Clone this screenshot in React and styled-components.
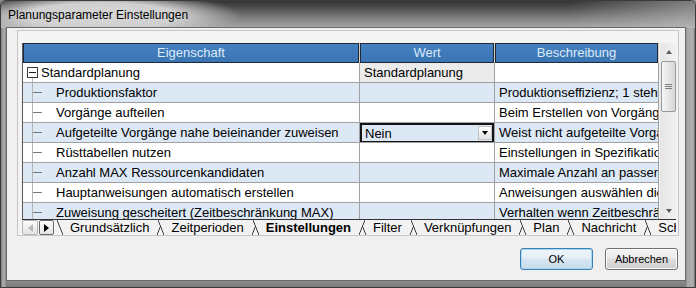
import React from 'react';
import styled, { createGlobalStyle } from 'styled-components';

const Global = createGlobalStyle`
  html, body { margin: 0; padding: 0; background: #8a8a8a; }
  body { font-family: "Liberation Sans", Arial, sans-serif; }
  #root { width: 696px; height: 288px; }
`;

const Window = styled.div`
  width: 696px;
  height: 288px;
  box-sizing: border-box;
  border: 1px solid #3b3b3b;
  border-radius: 6px 6px 0 0;
  overflow: hidden;
  display: flex;
  flex-direction: column;
  background: linear-gradient(to bottom, #8f8f8f, #a2a2a2 80%, #8c8c8c);
`;

const TitleBar = styled.div`
  height: 27px;
  flex: none;
  display: flex;
  align-items: center;
  padding-left: 7px;
  font-size: 12px;
  color: #000;
  background:
    radial-gradient(ellipse 140px 24px at 100px 15px, #d6d6d6 0%, #d0d0d0 55%, rgba(205,205,205,0) 100%),
    linear-gradient(to right, rgba(0,0,0,0) 82%, rgba(190,190,190,0.55) 100%),
    linear-gradient(to bottom, #343434 0%, #525252 28%, #828282 65%, #a8a8a8 100%);
`;

const FrameBody = styled.div`
  flex: 1;
  display: flex;
  padding: 0 10px 7px 6px;
  background: linear-gradient(to right, #7a7a7a 0, #a9a9a9 2px, #a2a2a2 4px, #6e6e6e 6px, rgba(0,0,0,0) 6px),
    linear-gradient(to left, #6e6e6e 0, #b0b0b0 2px, #a5a5a5 8px, #707070 10px, rgba(0,0,0,0) 10px),
    linear-gradient(to bottom, #9a9a9a, #b4b4b4 90%, #7c7c7c);
`;

const Client = styled.div`
  width: 678px;
  min-width: 0;
  flex: none;
  box-sizing: border-box;
  background: #f0f0f0;
  display: flex;
  flex-direction: column;
  padding: 2px 6px 0 10px;
  box-shadow: 0 0 0 1px #6a6a6a;
`;

const Panel = styled.div`
  width: 662px;
  height: 206px;
  box-sizing: border-box;
  border: 1px solid #c6c6c6;
  background: #f4f4f4;
  padding: 12px 1px 0 4px;
  display: flex;
  flex-direction: column;
`;

const GridArea = styled.div`
  display: flex;
  gap: 1px;
  height: 176px;
`;

const Table = styled.div`
  width: 637px;
  box-sizing: border-box;
  border-left: 1px solid #5a5a5a;
  overflow: hidden;
  display: flex;
  flex-direction: column;
`;

const cols = '337px 135px 164px';

const HeaderRow = styled.div`
  display: grid;
  grid-template-columns: ${cols};
  height: 20px;
  flex: none;
  background: #d8cfc0;
`;

const HeaderCell = styled.div`
  box-sizing: border-box;
  margin-right: 1px;
  border: 1px solid #1c2a3a;
  background: linear-gradient(to bottom, #4580c0, #3a74b3);
  color: #dbeaf8;
  font-size: 13px;
  line-height: 18px;
  text-align: center;
  white-space: nowrap;
  overflow: hidden;
`;

const Row = styled.div`
  display: grid;
  grid-template-columns: ${cols};
  height: 20px;
  flex: none;
  background: ${(p) => (p.$alt ? '#dde8f5' : '#ffffff')};
`;

const Cell = styled.div`
  box-sizing: border-box;
  border-right: 1px solid #a0a0a0;
  border-bottom: 1px solid #a0a0a0;
  font-size: 13px;
  line-height: 19px;
  color: #000;
  padding-left: ${(p) => (p.$pad != null ? p.$pad : 4)}px;
  white-space: nowrap;
  overflow: hidden;
  display: flex;
  align-items: center;
  background: ${(p) => p.$bg || 'transparent'};
`;

const Guide = styled.span`
  flex: none;
  width: 33px;
  height: 100%;
  align-self: stretch;
  background:
    linear-gradient(#b4b4b4, #b4b4b4) 9px 0 / 1px 100% no-repeat,
    linear-gradient(#7a7a7a, #7a7a7a) 10px 9px / 9px 1px no-repeat;
`;

const RootCell = styled(Cell)`
  padding-left: 4px;
  background: linear-gradient(#b4b4b4, #b4b4b4) 9px 15px / 1px 5px no-repeat;
`;

const MinusBox = styled.span`
  flex: none;
  width: 11px;
  height: 11px;
  box-sizing: border-box;
  border: 1px solid #3a3a3a;
  background: linear-gradient(#1a1a1a, #1a1a1a) 1px 4px / 7px 1px no-repeat, #fff;
  margin-right: 3px;
`;

const Combo = styled.div`
  flex: 1;
  height: 20px;
  box-sizing: border-box;
  border: 2px solid #141414;
  margin-left: -4px;
  margin-bottom: -1px;
  display: flex;
  align-items: center;
  padding-left: 3px;
  font-size: 13px;
`;

const ComboText = styled.span`
  flex: 1;
`;

const ComboArrow = styled.span`
  width: 14px;
  height: 14px;
  box-sizing: border-box;
  border: 1px solid #c4c4c4;
  background: linear-gradient(to bottom, #ffffff, #e2e2e2);
  display: flex;
  align-items: center;
  justify-content: center;
  &::after {
    content: '';
    border-left: 3.5px solid transparent;
    border-right: 3.5px solid transparent;
    border-top: 4px solid #000;
  }
`;

const ScrollBar = styled.div`
  width: 17px;
  height: 176px;
  display: flex;
  flex-direction: column;
  background: linear-gradient(to right, #e6e6e6, #f2f2f2);
`;

const ScrollArrow = styled.div`
  height: 17px;
  flex: none;
  display: flex;
  align-items: center;
  justify-content: center;
  &::after {
    content: '';
    border-left: 3.5px solid transparent;
    border-right: 3.5px solid transparent;
    ${(p) => (p.$down ? 'border-top: 4px solid #5c5c5c;' : 'border-bottom: 4px solid #5c5c5c;')}
  }
`;

const Track = styled.div`
  flex: 1;
  padding: 1px 0 0 0;
`;

const Thumb = styled.div`
  height: 51px;
  margin: 0 1px;
  box-sizing: border-box;
  border: 1px solid #9a9a9a;
  border-radius: 2px;
  background: linear-gradient(to right, #f6f6f6, #e6e6e6 50%, #d6d6d6);
  display: flex;
  align-items: center;
  justify-content: center;
  &::after {
    content: '';
    width: 7px;
    height: 5px;
    background: repeating-linear-gradient(to bottom, #7d7d7d 0, #7d7d7d 1px, transparent 1px, transparent 2px);
  }
`;

const TabStrip = styled.div`
  height: 16px;
  box-sizing: border-box;
  border-top: 1px solid #333;
  display: flex;
  align-items: flex-start;
  overflow: hidden;
  margin-right: 1px;
  min-width: 0;
`;

const ScrollBtn = styled.div`
  flex: none;
  width: ${(p) => (p.$left ? 16 : 15)}px;
  height: 15px;
  box-sizing: border-box;
  border: 1px solid ${(p) => (p.$disabled ? '#b5b5b5' : '#6a6a6a')};
  border-radius: 2px;
  background: linear-gradient(to bottom, #fbfbfb, #e4e4e4);
  margin-right: 1px;
  display: flex;
  align-items: center;
  justify-content: center;
  &::after {
    content: '';
    border-top: 4px solid transparent;
    border-bottom: 4px solid transparent;
    ${(p) =>
      p.$left
        ? `border-right: 5px solid ${p.$disabled ? '#b8b8b8' : '#000'};`
        : `border-left: 5px solid ${p.$disabled ? '#b8b8b8' : '#000'};`}
  }
`;

const Tabs = styled.div`
  display: flex;
  margin-left: 2px;
`;

const tabFill = '#f2f2f2';

const Tab = styled.div`
  position: relative;
  flex: none;
  height: 15px;
  padding: 0 14px 0 13px;
  margin-right: -5px;
  font-size: 13px;
  line-height: 15px;
  font-weight: ${(p) => (p.$active ? 700 : 400)};
  color: #000;
  white-space: nowrap;
  z-index: ${(p) => (p.$active ? 2 : 'auto')};
  background: linear-gradient(${tabFill}, ${tabFill}) 6px 0 / calc(100% - 12px) 100% no-repeat;
  &::before,
  &::after {
    content: '';
    position: absolute;
    top: 0;
    width: 6px;
    height: 15px;
  }
  &::before {
    left: 0;
    background: linear-gradient(to top right, transparent calc(50% - 0.8px), #222 50%, ${tabFill} calc(50% + 0.8px));
  }
  &::after {
    right: 0;
    background: linear-gradient(to bottom right, ${tabFill} calc(50% - 0.8px), #222 50%, transparent calc(50% + 0.8px));
  }
`;

const TabLabel = styled.span`
  position: relative;
`;

const ButtonRow = styled.div`
  display: flex;
  justify-content: flex-end;
  gap: 12px;
  margin-top: 12px;
  margin-right: 1px;
`;

const Button = styled.button`
  width: 73px;
  height: 22px;
  box-sizing: border-box;
  border: 1px solid ${(p) => (p.$default ? '#3c7fb1' : '#707070')};
  border-radius: 3px;
  background: ${(p) =>
    p.$default
      ? 'linear-gradient(to bottom, #eef5fa 0%, #e6f0f7 45%, #d6e6f1 50%, #c8dcea 100%)'
      : 'linear-gradient(to bottom, #f2f2f2 0%, #ebebeb 45%, #dddddd 50%, #cfcfcf 100%)'};
  box-shadow: ${(p) => (p.$default ? 'inset 0 0 0 1px #a6d8f5' : 'inset 0 0 0 1px #fcfcfc')};
  font-family: "Liberation Sans", Arial, sans-serif;
  font-size: 11px;
  color: #000;
  padding: 0;
`;

const rows = [
  { label: 'Produktionsfaktor', desc: 'Produktionseffizienz; 1 steht für 100 %' },
  { label: 'Vorgänge aufteilen', desc: 'Beim Erstellen von Vorgängen aufteilen' },
  { label: 'Aufgeteilte Vorgänge nahe beieinander zuweisen', desc: 'Weist nicht aufgeteilte Vorgänge zu', combo: 'Nein' },
  { label: 'Rüsttabellen nutzen', desc: 'Einstellungen in Spezifikation' },
  { label: 'Anzahl MAX Ressourcenkandidaten', desc: 'Maximale Anzahl an passenden' },
  { label: 'Hauptanweisungen automatisch erstellen', desc: 'Anweisungen auswählen die' },
  { label: 'Zuweisung gescheitert (Zeitbeschränkung MAX)', desc: 'Verhalten wenn Zeitbeschränkung' },
];

const tabs = ['Grundsätzlich', 'Zeitperioden', 'Einstellungen', 'Filter', 'Verknüpfungen', 'Plan', 'Nachricht', 'Schleifen'];

export default function App() {
  return (
    <>
      <Global />
      <Window>
        <TitleBar>Planungsparameter Einstellungen</TitleBar>
        <FrameBody>
          <Client>
            <Panel>
              <GridArea>
                <Table>
                  <HeaderRow>
                    <HeaderCell>Eigenschaft</HeaderCell>
                    <HeaderCell>Wert</HeaderCell>
                    <HeaderCell>Beschreibung</HeaderCell>
                  </HeaderRow>
                  <Row>
                    <RootCell>
                      <MinusBox />
                      Standardplanung
                    </RootCell>
                    <Cell $bg="#ebebeb">Standardplanung</Cell>
                    <Cell />
                  </Row>
                  {rows.map((r, i) => (
                    <Row key={r.label} $alt={i % 2 === 0}>
                      <Cell $pad={0}>
                        <Guide />
                        {r.label}
                      </Cell>
                      <Cell>
                        {r.combo ? (
                          <Combo>
                            <ComboText>{r.combo}</ComboText>
                            <ComboArrow />
                          </Combo>
                        ) : null}
                      </Cell>
                      <Cell>{r.desc}</Cell>
                    </Row>
                  ))}
                </Table>
                <ScrollBar>
                  <ScrollArrow />
                  <Track>
                    <Thumb />
                  </Track>
                  <ScrollArrow $down />
                </ScrollBar>
              </GridArea>
              <TabStrip>
                <ScrollBtn $left $disabled />
                <ScrollBtn />
                <Tabs>
                  {tabs.map((t) => (
                    <Tab key={t} $active={t === 'Einstellungen'}>
                      <TabLabel>{t}</TabLabel>
                    </Tab>
                  ))}
                </Tabs>
              </TabStrip>
            </Panel>
            <ButtonRow>
              <Button $default>OK</Button>
              <Button>Abbrechen</Button>
            </ButtonRow>
          </Client>
        </FrameBody>
      </Window>
    </>
  );
}
